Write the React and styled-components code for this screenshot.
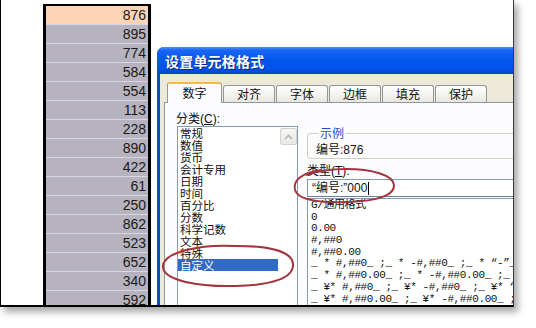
import styled, { createGlobalStyle } from "styled-components";

const GlobalStyle = createGlobalStyle`
  html, body {
    margin: 0;
    padding: 0;
    background: #fff;
  }
  body {
    font-family: "Liberation Sans", "Noto Sans CJK SC", sans-serif;
  }
`;

const Page = styled.div`
  position: relative;
  width: 536px;
  height: 328px;
  overflow: hidden;
  background: #fff;
`;

const Frame = styled.div`
  width: 512px;
  height: 305px;
  display: flex;
  align-items: flex-start;
  overflow: hidden;
  background: #fff;
  border-left: 1px solid #000;
  border-right: 1px solid #3a3a3a;
  border-bottom: 2px solid #000;
  box-shadow: 4px 5px 7px rgba(0, 0, 0, 0.35);
`;

const Spacer = styled.div`
  width: 42px;
  flex: none;
`;

const Column = styled.div`
  flex: none;
  width: 102px;
  margin-top: 4px;
  border-top: 2px solid #000;
  border-left: 3px solid #000;
  border-right: 3px solid #000;
  display: flex;
  flex-direction: column;
`;

const Cell = styled.div`
  height: 18px;
  border-bottom: 1px solid #d6d6e6;
  background: ${(p) => (p.$active ? "#fbd5b5" : "#b6b2be")};
  color: #1a1a1a;
  font-family: "Liberation Sans", Arial, sans-serif;
  font-size: 14px;
  line-height: 18px;
  text-align: right;
  padding-right: 2px;
`;

const Dialog = styled.div`
  flex: none;
  width: 400px;
  height: 300px;
  margin-top: 47px;
  margin-left: 6px;
  border-radius: 7px 7px 0 0;
  background: #0a48d8;
  padding: 0 3px;
  display: flex;
  flex-direction: column;
`;

const TitleBar = styled.div`
  height: 27px;
  flex: none;
  margin: 0 -3px;
  border-radius: 7px 7px 0 0;
  background: linear-gradient(
    180deg,
    #4d8cfb 0%,
    #1a66f4 12%,
    #0358ec 45%,
    #0352ea 80%,
    #0444c8 100%
  );
  color: #fff;
  font-family: "Noto Sans CJK SC", sans-serif;
  font-weight: bold;
  font-size: 14px;
  line-height: 29px;
  padding-left: 8px;
  text-shadow: 1px 1px 0 #0a2a8a;
  letter-spacing: 0.2px;
`;

const Body = styled.div`
  flex: 1;
  background: #ece9d8;
  padding: 8px 4px 0 4px;
  display: flex;
  flex-direction: column;
`;

const Tabs = styled.div`
  display: flex;
  align-items: flex-end;
  height: 20px;
  padding-left: 3px;
  position: relative;
  z-index: 1;
`;

const Tab = styled.div`
  box-sizing: border-box;
  width: ${(p) => (p.$active ? "55px" : "52px")};
  height: ${(p) => (p.$active ? "21px" : "17px")};
  margin-left: ${(p) => (p.$active ? "0" : "1px")};
  margin-bottom: ${(p) => (p.$active ? "-1px" : "0")};
  border: 1px solid #919b9c;
  border-bottom: none;
  border-top: ${(p) => (p.$active ? "2px solid #f5b84a" : "1px solid #919b9c")};
  border-radius: 3px 3px 0 0;
  background: ${(p) =>
    p.$active ? "#fcfcfe" : "linear-gradient(180deg, #ffffff 0%, #f3f2ee 60%, #e6e5de 100%)"};
  font-family: "Noto Sans CJK SC", sans-serif;
  font-size: 12px;
  line-height: ${(p) => (p.$active ? "18px" : "15px")};
  text-align: center;
  color: #111;
`;

const Panel = styled.div`
  flex: 1;
  background: #fcfcfe;
  border: 1px solid #919b9c;
  display: flex;
  padding: 9px 0 0 11px;
  gap: 9px;
`;

const LeftPane = styled.div`
  display: flex;
  flex-direction: column;
`;

const Label = styled.div`
  font-family: "Liberation Sans", "Noto Sans CJK SC", sans-serif;
  font-size: 12px;
  line-height: 14px;
  height: 14px;
  color: #111;
  margin-top: ${(p) => p.$top || "0"};

  u {
    text-decoration: underline;
  }
`;

const CategoryList = styled.div`
  margin-left: 1px;
  width: 119px;
  height: 200px;
  border: 1px solid #7f9db9;
  background: #fff;
  display: flex;
  gap: 2px;
`;

const Items = styled.div`
  width: 100px;
  display: flex;
  flex-direction: column;
`;

const Item = styled.div`
  height: 12px;
  font-family: "Noto Sans CJK SC", sans-serif;
  font-size: 11.5px;
  line-height: 12px;
  padding-left: 2px;
  white-space: nowrap;
  color: ${(p) => (p.$selected ? "#fff" : "#111")};
  background: ${(p) => (p.$selected ? "#316ac5" : "transparent")};
`;

const ScrollTrack = styled.div`
  width: 17px;
  padding-top: 1px;
`;

const ScrollButton = styled.div`
  box-sizing: border-box;
  width: 17px;
  height: 17px;
  border: 1px solid #d4d2cc;
  border-radius: 2px;
  background: linear-gradient(180deg, #f6f6f4 0%, #e9e8e4 100%);
  display: flex;
  align-items: center;
  justify-content: center;
`;

const RightPane = styled.div`
  flex: 1;
  display: flex;
  flex-direction: column;
  padding-top: 14px;
`;

const Group = styled.fieldset`
  margin: 0;
  padding: 3px 0 1px 8px;
  border: 1px solid #d0d0bf;
  border-radius: 3px;
  min-width: 0;
`;

const Legend = styled.legend`
  padding: 0 2px;
  margin-left: 2px;
  font-family: "Noto Sans CJK SC", sans-serif;
  font-size: 12px;
  line-height: 14px;
  color: #1a4fd0;
`;

const SampleText = styled.div`
  font-family: "Liberation Sans", "Noto Sans CJK SC", sans-serif;
  font-size: 12px;
  line-height: 14px;
  color: #111;
`;

const Input = styled.div`
  margin-top: 1px;
  height: 16px;
  border: 1px solid #7f9db9;
  border-bottom-color: #6d7f95;
  background: #fff;
  padding-left: 4px;
  font-family: "Liberation Sans", "Noto Sans CJK SC", sans-serif;
  font-size: 12px;
  line-height: 17px;
  color: #111;
  display: flex;
  align-items: center;
`;

const Caret = styled.span`
  display: inline-block;
  width: 1px;
  height: 13px;
  background: #000;
  margin-left: 1px;
`;

const FormatList = styled.div`
  flex: 1;
  margin-top: 1px;
  border: 1px solid #7f9db9;
  border-bottom: none;
  background: #fff;
  padding: 1px 0 0 3px;
  overflow: hidden;
`;

const Format = styled.div`
  height: 11.7px;
  font-family: "Liberation Mono", "Noto Sans CJK SC", monospace;
  font-size: 11px;
  letter-spacing: -0.4px;
  line-height: 11.7px;
  white-space: pre;
  color: #111;
`;

const Marks = styled.svg`
  position: absolute;
  left: 0;
  top: 0;
  pointer-events: none;
`;

const numbers = [876, 895, 774, 584, 554, 113, 228, 890, 422, 61, 250, 862, 523, 652, 340, 592];
const tabs = ["数字", "对齐", "字体", "边框", "填充", "保护"];
const categories = [
  "常规", "数值", "货币", "会计专用", "日期", "时间",
  "百分比", "分数", "科学记数", "文本", "特殊", "自定义",
];
const formats = [
  "G/通用格式",
  "0",
  "0.00",
  "#,##0",
  "#,##0.00",
  "_ * #,##0_ ;_ * -#,##0_ ;_ * “-”_ ;_ @_ ",
  "_ * #,##0.00_ ;_ * -#,##0.00_ ;_ * “-”??_ ;_ @_ ",
  "_ ¥* #,##0_ ;_ ¥* -#,##0_ ;_ ¥* “-”_ ;_ @_ ",
  "_ ¥* #,##0.00_ ;_ ¥* -#,##0.00_ ;_ ¥* “-”??_ ;_ @_ ",
];

export default function App() {
  return (
    <Page>
      <GlobalStyle />
      <Frame>
        <Spacer />
        <Column>
          {numbers.map((n, i) => (
            <Cell key={n} $active={i === 0}>
              {n}
            </Cell>
          ))}
        </Column>
        <Dialog>
          <TitleBar>设置单元格格式</TitleBar>
          <Body>
            <Tabs>
              {tabs.map((t, i) => (
                <Tab key={t} $active={i === 0}>
                  {t}
                </Tab>
              ))}
            </Tabs>
            <Panel>
              <LeftPane>
                <Label>
                  分类(<u>C</u>):
                </Label>
                <CategoryList>
                  <Items>
                    {categories.map((c) => (
                      <Item key={c} $selected={c === "自定义"}>
                        {c}
                      </Item>
                    ))}
                  </Items>
                  <ScrollTrack>
                    <ScrollButton>
                      <svg width="9" height="6" viewBox="0 0 9 6">
                        <path d="M1 5 L4.5 1.5 L8 5" fill="none" stroke="#b5b5b0" strokeWidth="1.6" />
                      </svg>
                    </ScrollButton>
                  </ScrollTrack>
                </CategoryList>
              </LeftPane>
              <RightPane>
                <Group>
                  <Legend>示例</Legend>
                  <SampleText>编号:876</SampleText>
                </Group>
                <Label $top="5px">
                  类型(<u>T</u>):
                </Label>
                <Input>
                  “编号:”000
                  <Caret />
                </Input>
                <FormatList>
                  {formats.map((f) => (
                    <Format key={f}>{f}</Format>
                  ))}
                </FormatList>
              </RightPane>
            </Panel>
          </Body>
        </Dialog>
      </Frame>
      <Marks width="536" height="328" viewBox="0 0 536 328">
        <path
          d="M236 246 C200 244 164 252 163 266 C162 281 200 287 236 286 C272 285 294 278 293 264 C292 251 268 245 228 246"
          fill="none"
          stroke="#a3343f"
          strokeWidth="2"
        />
        <path
          d="M322 170 C300 173 293 181 295 190 C298 200 320 203 348 202 C378 201 395 195 394 185 C393 175 372 169 346 169 C330 169 318 171 306 175"
          fill="none"
          stroke="#a3343f"
          strokeWidth="2"
        />
      </Marks>
    </Page>
  );
}
